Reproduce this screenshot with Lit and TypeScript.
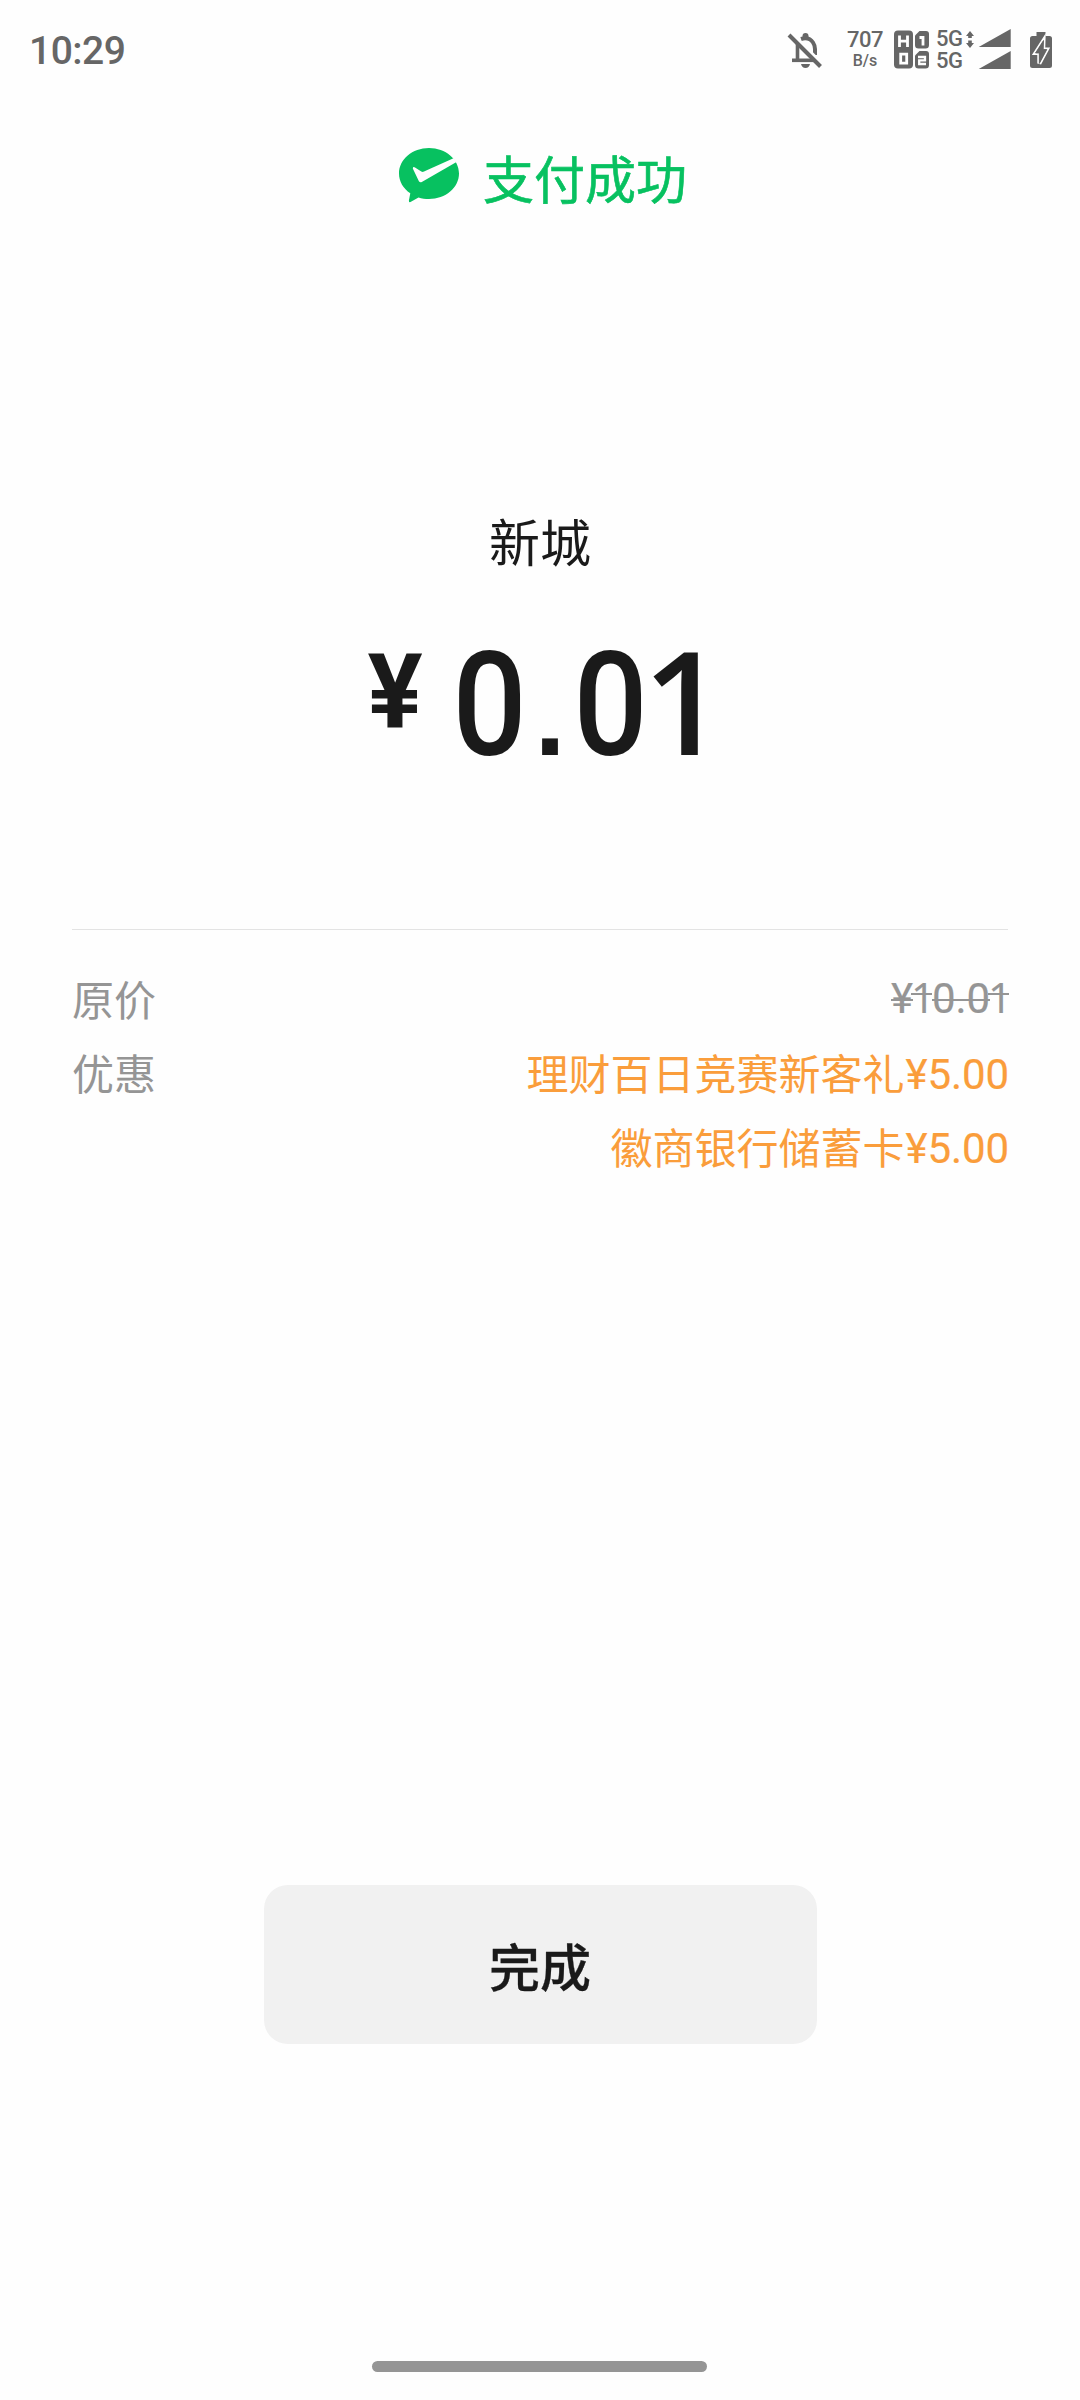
import { LitElement, html, css, svg } from "lit";
import { customElement, property } from "lit/decorators.js";

@customElement("status-bar")
export class StatusBar extends LitElement {
  static styles = css`
    :host { display: flex; height: 103px; padding: 0 28px 0 29px; box-sizing: border-box; align-items: flex-start; justify-content: space-between; color: #666; font-family: Roboto, sans-serif; font-weight: 500; }
    .time { font-size: 39px; line-height: 103px; letter-spacing: -0.5px; }
    .icons { display: flex; height: 103px; align-items: flex-start; padding-top: 29px; box-sizing: border-box; }
    .icons svg { display: block; flex: none; fill: #666; }
    .bell { margin-top: 3px; }
    .speed { width: 38px; margin-left: 23px; text-align: center; display: flex; flex-direction: column; white-space: nowrap; }
    .rate { font-size: 22px; line-height: 22px; letter-spacing: -0.5px; }
    .unit { font-size: 16px; line-height: 16px; margin-top: 2px; }
    .hd { margin: 1px 0 0 10px; }
    .nets { width: 28px; margin-left: 6px; font-size: 22px; line-height: 22px; letter-spacing: -0.4px; margin-top: -1px; }
    .arrows { margin: 2px 0 0 2px; }
    .signal { margin-left: 4px; }
    .battery { margin: 3px 0 0 19px; }
  `;
  render() {
    return html`
      <span class="time">10:29</span>
      <div class="icons">
        <svg class="bell" width="36" height="38" viewBox="0 0 36 38">
          <path d="M14 7 Q22 4.500 26 10.500 Q28 13.500 28 17 V23" fill="none" stroke="#666" stroke-width="4"/>
          <rect x="15.500" y="1" width="6" height="7" rx="3"/>
          <path d="M14 32 H23 Q22 36 18.500 36 Q15 36 14 32Z"/>
          <path d="M3 3 L34 34" stroke="#fefefe" stroke-width="8"/>
          <path d="M10.500 12 V28" stroke="#666" stroke-width="3.600"/>
          <path d="M5 28.300 H28" stroke="#666" stroke-width="3.600"/>
          <path d="M2 3 L33.500 34.500" stroke="#666" stroke-width="4"/>
        </svg>
        <div class="speed"><span class="rate">707</span><span class="unit">B/s</span></div>
        <svg class="hd" width="36" height="39" viewBox="0 0 36 39">
          <rect x="0" y="0.500" width="19" height="38" rx="4"/>
          <path d="M5.500 5.500 V17 M13.500 5.500 V17 M5.500 11.200 H13.500" stroke="#fff" stroke-width="2.800" fill="none"/>
          <path d="M6.700 24.200 H12.700 V33.200 H6.700Z" stroke="#fff" stroke-width="2.800" fill="none"/>
          <path d="M25.500 1 H32 Q35 1 35 4 V15 Q35 18.500 31.500 18.500 H24.500 Q21 18.500 21 15 V5.500Z"/>
          <path d="M25.500 7.500 H29 V15.500" stroke="#fff" stroke-width="2.800" fill="none"/>
          <path d="M25.500 21 H32 Q35 21 35 24 V35 Q35 38.500 31.500 38.500 H24.500 Q21 38.500 21 35 V25.500Z"/>
          <path d="M24 27 H31 V30.300 H25.200 V34 H32" stroke="#fff" stroke-width="2.300" fill="none"/>
        </svg>
        <div class="nets"><div>5G</div><div>5G</div></div>
        <svg class="arrows" width="8" height="17" viewBox="0 0 8 17">
          <path d="M4 0 L8 5 H5.800 V7 H2.200 V5 H0Z M4 17 L8 12 H5.800 V9.500 H2.200 V12 H0Z"/>
        </svg>
        <svg class="signal" width="33" height="41" viewBox="0 0 33 41">
          <path d="M32.700 0 V18 H0.700Z M32.700 22 V40 H0.700Z"/>
        </svg>
        <svg class="battery" width="22" height="36" viewBox="0 0 22 36">
          <path d="M6.500 0 H15.500 V4 H19.500 Q22 4 22 6.500 V33.500 Q22 36 19.500 36 H2.500 Q0 36 0 33.500 V6.500 Q0 4 2.500 4 H6.500Z"/>
          <path d="M13.500 8.500 L5.500 21 H9.300 V31.500 L16.800 17.500 H13.200Z" fill="#666" stroke="#fff" stroke-width="4" paint-order="stroke"/>
          <path d="M13.500 8.500 L5.500 21 H9.300 V31.500 L16.800 17.500 H13.200Z" stroke="#666" stroke-width="0.800"/>
        </svg>
      </div>
    `;
  }
}

@customElement("pay-amount")
export class PayAmount extends LitElement {
  @property() value = "";
  static styles = css`
    :host { display: flex; justify-content: center; align-items: baseline; height: 170px; padding-left: 13px; color: #1a1a1a; font-family: Roboto, sans-serif; line-height: 170px; }
    .yen { font-size: 103px; font-weight: 700; width: 54px; display: flex; justify-content: center; position: relative; top: -28px; }
    .digits { font-size: 145px; font-weight: 500; display: flex; align-items: baseline; margin-left: 27px; }
    .d { display: flex; justify-content: center; width: 81px; transform: scaleX(0.9); }
    .dot { width: 40px; font-family: "Liberation Sans", sans-serif; font-weight: 700; font-size: 112px; transform: none; }
    .one { width: 82px; margin-left: -8px; margin-right: -8px; font-family: "Open Sans", sans-serif; font-weight: 600; font-size: 144px; transform: none; }
    .one:last-child { margin-right: 0; }
  `;
  render() {
    return html`
      <span class="yen">¥</span>
      <span class="digits">${[...this.value].map(
        (c) => html`<span class="d ${c === "." ? "dot" : c === "1" ? "one" : ""}">${c}</span>`
      )}</span>
    `;
  }
}

const payLogo = svg`
  <path d="M30 0 C46.600 0 60 11.400 60 25.500 C60 39.600 46.600 51 30 51 C26.300 51 22.700 50.400 19.500 49.400 L11.500 54 Q9.600 54.600 9.900 52.600 L11.300 45.300 C4.300 40.600 0 33.500 0 25.500 C0 11.400 13.400 0 30 0Z" fill="#07c160"/>
  <path d="M13.800 20.500 Q14 18.300 16 19.400 L22.300 23.500 Q23.600 24.200 25 23.600 L54.500 10.300 L57.500 14 L22.800 34 Q21 35 19.900 33.200Z" fill="#fefefe"/>
`;

@customElement("app-root")
export class AppRoot extends LitElement {
  static styles = css`
    :host { display: flex; flex-direction: column; width: 1080px; height: 2400px; background: #fefefe; font-family: "Noto Sans CJK SC", sans-serif; color: #1a1a1a; overflow: hidden; }
    .head { display: flex; justify-content: center; align-items: flex-start; height: 106px; margin-top: 24px; gap: 24px; padding-left: 6px; color: #07c160; font-size: 51px; line-height: 100px; }
    .logo { display: block; margin-top: 21px; }
    .title { -webkit-text-stroke: 0.6px currentColor; }
    .shop { margin-top: 257px; height: 100px; line-height: 100px; font-size: 51px; text-align: center; }
    .sum { margin-top: 24px; }
    .details { margin: 145px 72px 0; border-top: 1px solid #e3e3e3; padding-top: 31px; font-size: 42px; }
    .row { display: flex; justify-content: space-between; line-height: 74px; height: 74px; color: #959595; white-space: nowrap; }
    .list { color: #fa9d3b; text-align: right; }
    .line { height: 74px; }
    .num { font-family: Roboto, sans-serif; letter-spacing: -0.1px; -webkit-text-stroke: 0.2px currentColor; position: relative; top: -1px; left: 1px; }
    .old { text-decoration: line-through; text-decoration-thickness: 2px; }
    .one { font-family: "Open Sans", sans-serif; font-weight: 500; margin-left: -2px; letter-spacing: -3px; }
    .done { margin: 776px auto 0; width: 553px; height: 159px; border: 0; padding: 2px 0 0; box-sizing: border-box; border-radius: 24px; background: #f1f1f1; color: #1a1a1a; font-family: inherit; font-size: 51px; font-weight: 500; line-height: 157px; text-align: center; -webkit-text-stroke: 0.3px currentColor; }
    .home { width: 335px; height: 11px; border-radius: 6px; background: #959595; margin: 317px 0 0 372px; }
  `;
  render() {
    return html`
      <status-bar></status-bar>
      <div class="head">
        <svg class="logo" width="60" height="55" viewBox="0 0 60 55">${payLogo}</svg>
        <span class="title">支付成功</span>
      </div>
      <div class="shop">新城</div>
      <pay-amount class="sum" value="0.01"></pay-amount>
      <div class="details">
        <div class="row"><span>原价</span><span class="num old">¥<span class="one">1</span>0.0<span class="one">1</span></span></div>
        <div class="row">
          <span>优惠</span>
          <div class="list">
            <div class="line">理财百日竞赛新客礼<span class="num">¥5.00</span></div>
            <div class="line">徽商银行储蓄卡<span class="num">¥5.00</span></div>
          </div>
        </div>
      </div>
      <button class="done">完成</button>
      <div class="home"></div>
    `;
  }
}
